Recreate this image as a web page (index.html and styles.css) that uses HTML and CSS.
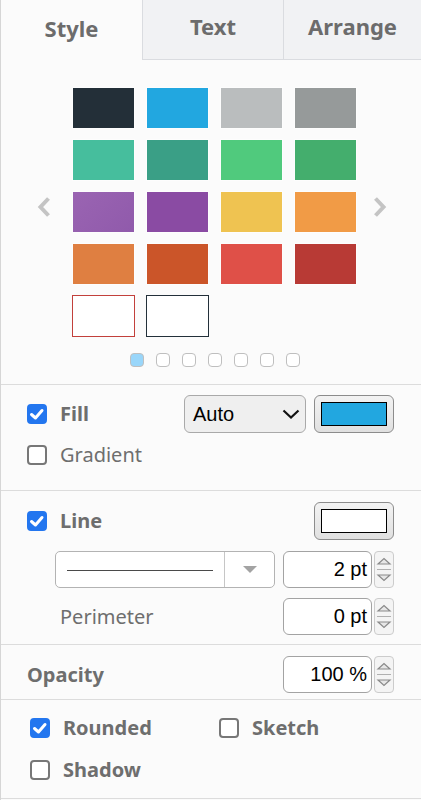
FILE: index.html
```html
<!DOCTYPE html>
<html>
<head>
<meta charset="utf-8">
<link rel="stylesheet" href="styles.css">
</head>
<body>
<div class="panel">
  <div class="tabs">
    <div class="tab tab-active">Style</div>
    <div class="tab tab-text">Text</div>
    <div class="tab tab-arrange">Arrange</div>
  </div>

  <div class="palette">
    <svg class="nav" width="14" height="22" viewBox="0 0 14 22"><polyline points="11.5,2.5 3.5,11 11.5,19.5" /></svg>
    <div class="palette-center">
      <div class="swatches">
        <div class="sw" style="background:#232f38"></div>
        <div class="sw" style="background:#22a7e0"></div>
        <div class="sw" style="background:#babdbe"></div>
        <div class="sw" style="background:#969a9a"></div>
        <div class="sw" style="background:#46be9d"></div>
        <div class="sw" style="background:#3a9f86"></div>
        <div class="sw" style="background:#50ca7d"></div>
        <div class="sw" style="background:#44ae6d"></div>
        <div class="sw" style="background:linear-gradient(135deg,#9a64b2,#905aab)"></div>
        <div class="sw" style="background:#8a4ba3"></div>
        <div class="sw" style="background:#efc351"></div>
        <div class="sw" style="background:#f19b46"></div>
        <div class="sw" style="background:#df7f41"></div>
        <div class="sw" style="background:#cb5529"></div>
        <div class="sw" style="background:#df5048"></div>
        <div class="sw" style="background:#b83a35"></div>
        <div class="sw sw-white sw-red"></div>
        <div class="sw sw-white sw-dark"></div>
      </div>
      <div class="dots">
        <span class="dot dot-on"></span>
        <span class="dot"></span>
        <span class="dot"></span>
        <span class="dot"></span>
        <span class="dot"></span>
        <span class="dot"></span>
        <span class="dot"></span>
      </div>
    </div>
    <svg class="nav nav-right" width="14" height="22" viewBox="0 0 14 22"><polyline points="2.5,2.5 10.5,11 2.5,19.5" /></svg>
  </div>

  <div class="section sec-fill">
    <div class="row row-main">
      <div class="check">
        <span class="cb cb-on"><svg width="20" height="20" viewBox="0 0 20 20"><polyline points="4.5,10.5 8.5,14 15,6.5" /></svg></span>
        <span class="lbl bold">Fill</span>
      </div>
      <div class="controls">
        <div class="select">
          <span>Auto</span>
          <svg width="18" height="10" viewBox="0 0 18 10"><polyline points="1.5,1.5 9,8.5 16.5,1.5" /></svg>
        </div>
        <div class="colorbtn"><div class="colorfill fill-blue"></div></div>
      </div>
    </div>
    <div class="row row-sub">
      <div class="check">
        <span class="cb"></span>
        <span class="lbl">Gradient</span>
      </div>
    </div>
  </div>

  <div class="section sec-line">
    <div class="row row-main">
      <div class="check">
        <span class="cb cb-on"><svg width="20" height="20" viewBox="0 0 20 20"><polyline points="4.5,10.5 8.5,14 15,6.5" /></svg></span>
        <span class="lbl bold">Line</span>
      </div>
      <div class="colorbtn"><div class="colorfill fill-white"></div></div>
    </div>
    <div class="row row-style">
      <div class="linestyle">
        <div class="ls-preview"><div class="ls-line"></div></div>
        <div class="ls-arrow"><svg width="14" height="8" viewBox="0 0 14 8"><polygon points="0,0 14,0 7,7" /></svg></div>
      </div>
      <div class="numfield">
        <div class="num">2 pt</div>
        <div class="spin"><svg width="20" height="37" viewBox="0 0 20 37"><polygon points="4,13 10,7.5 16,13" /><line x1="3" y1="18.5" x2="17" y2="18.5" /><polygon points="4,24 10,29.5 16,24" /></svg></div>
      </div>
    </div>
    <div class="row row-perim">
      <span class="lbl perim">Perimeter</span>
      <div class="numfield">
        <div class="num">0 pt</div>
        <div class="spin"><svg width="20" height="37" viewBox="0 0 20 37"><polygon points="4,13 10,7.5 16,13" /><line x1="3" y1="18.5" x2="17" y2="18.5" /><polygon points="4,24 10,29.5 16,24" /></svg></div>
      </div>
    </div>
  </div>

  <div class="section sec-opacity">
    <div class="row row-opacity">
      <span class="lbl bold">Opacity</span>
      <div class="numfield">
        <div class="num">100 %</div>
        <div class="spin"><svg width="20" height="37" viewBox="0 0 20 37"><polygon points="4,13 10,7.5 16,13" /><line x1="3" y1="18.5" x2="17" y2="18.5" /><polygon points="4,24 10,29.5 16,24" /></svg></div>
      </div>
    </div>
  </div>

  <div class="section sec-opts">
    <div class="check">
      <span class="cb cb-on"><svg width="20" height="20" viewBox="0 0 20 20"><polyline points="4.5,10.5 8.5,14 15,6.5" /></svg></span>
      <span class="lbl bold">Rounded</span>
    </div>
    <div class="check">
      <span class="cb"></span>
      <span class="lbl bold">Sketch</span>
    </div>
    <div class="check">
      <span class="cb"></span>
      <span class="lbl bold">Shadow</span>
    </div>
  </div>
</div>
</body>
</html>
```

FILE: styles.css
```css
html, body {
  margin: 0;
  padding: 0;
  background: #fbfbfb;
}

.panel {
  width: 421px;
  height: 800px;
  box-sizing: border-box;
  border-left: 1px solid #d6d6d6;
  background: #fbfbfb;
  font-family: "Noto Sans", "Open Sans", sans-serif;
  color: #707070;
  overflow: hidden;
}

/* Tabs */
.tabs {
  display: flex;
  height: 60px;
}

.tab {
  box-sizing: border-box;
  height: 60px;
  display: flex;
  justify-content: center;
  align-items: flex-start;
  font-size: 22px;
  font-weight: 700;
  line-height: 28px;
  color: #6c6c6c;
}

.tab-active {
  width: 141px;
  padding-top: 14px;
}

.tab-text,
.tab-arrange {
  background: #f1f2f4;
  border-left: 1px solid #dadce0;
  border-bottom: 1px solid #dadce0;
  padding-top: 12px;
}

.tab-text {
  width: 141px;
}

.tab-arrange {
  width: 138px;
}

/* Palette */
.palette {
  display: flex;
  align-items: flex-start;
  padding: 27px 0 17px 36px;
}

.nav {
  margin-top: 109px;
  flex: none;
}

.nav polyline {
  fill: none;
  stroke: #c4c4c4;
  stroke-width: 4;
  stroke-linejoin: miter;
}

.palette-center {
  margin-left: 21px;
  display: flex;
  flex-direction: column;
  align-items: center;
}

.nav-right {
  margin-left: 16px;
}

.swatches {
  display: grid;
  grid-template-columns: repeat(4, 63px);
  grid-auto-rows: 42px;
  column-gap: 11px;
  row-gap: 10px;
}

.sw {
  box-sizing: border-box;
  border: 1px solid #fdfdfd;
}

.sw-white {
  background: #ffffff;
}

.sw-red {
  border-color: #c2403b;
}

.sw-dark {
  border-color: #23303a;
}

.dots {
  display: flex;
  gap: 12px;
  margin-top: 16px;
}

.dot {
  width: 14px;
  height: 14px;
  box-sizing: border-box;
  border: 1px solid #bfbfbf;
  border-radius: 4px;
  background: #ffffff;
}

.dot-on {
  background: #99d6fa;
}

/* Sections */
.section {
  border-top: 1px solid #dcdcdc;
  padding: 0 27px 0 26px;
}

.row {
  display: flex;
  align-items: center;
  justify-content: space-between;
}

.check {
  display: flex;
  align-items: center;
  gap: 13px;
  height: 20px;
}

.cb {
  width: 20px;
  height: 20px;
  box-sizing: border-box;
  border: 2px solid #777777;
  border-radius: 4px;
  background: #ffffff;
  flex: none;
  position: relative;
}

.cb-on {
  background: #2376ef;
  border-color: #2376ef;
}

.cb svg {
  position: absolute;
  left: -2px;
  top: -2px;
}

.cb polyline {
  fill: none;
  stroke: #ffffff;
  stroke-width: 3;
  stroke-linecap: round;
  stroke-linejoin: round;
}

.lbl {
  font-size: 20px;
  line-height: 20px;
  color: #6e6e6e;
}

.bold {
  font-weight: 700;
}

/* Fill */
.sec-fill {
  padding-top: 10px;
  padding-bottom: 25px;
}

.row-main {
  height: 38px;
}

.row-sub {
  margin-top: 12px;
  height: 20px;
}

.controls {
  display: flex;
  gap: 8px;
}

.select {
  width: 122px;
  height: 38px;
  box-sizing: border-box;
  border: 1px solid #a9a9a9;
  border-radius: 6px;
  background: #efefef;
  display: flex;
  align-items: center;
  justify-content: space-between;
  padding: 0 5px 0 8px;
  font-family: "Liberation Sans", Arial, sans-serif;
  font-size: 20px;
  color: #000000;
}

.select polyline {
  fill: none;
  stroke: #111111;
  stroke-width: 2.2;
}

.colorbtn {
  width: 80px;
  height: 38px;
  box-sizing: border-box;
  border: 1px solid #8c8c8c;
  border-radius: 6px;
  background: linear-gradient(#f3f3f3, #e0e0e0);
  padding: 6px;
}

.colorfill {
  width: 100%;
  height: 100%;
  box-sizing: border-box;
  border: 1px solid #000000;
}

.fill-blue {
  background: #22a7e0;
}

.fill-white {
  background: #ffffff;
}

/* Line */
.sec-line {
  padding-top: 11px;
  padding-bottom: 9px;
}

.row-style {
  margin-top: 11px;
  height: 37px;
  padding-left: 28px;
}

.linestyle {
  width: 220px;
  height: 37px;
  box-sizing: border-box;
  border: 1px solid #b3b3b3;
  border-radius: 5px;
  background: #ffffff;
  display: flex;
}

.ls-preview {
  width: 168px;
  padding: 0 11px;
  display: flex;
  align-items: center;
  box-sizing: border-box;
}

.ls-line {
  width: 100%;
  height: 1px;
  background: #4a4a4a;
  margin-top: 1px;
}

.ls-arrow {
  flex: 1;
  border-left: 1px solid #c6c6c6;
  display: flex;
  align-items: center;
  justify-content: center;
}

.ls-arrow polygon {
  fill: #a3a3a3;
}

.numfield {
  display: flex;
  gap: 2px;
}

.num {
  width: 89px;
  height: 37px;
  box-sizing: border-box;
  border: 1px solid #a3a3a3;
  border-radius: 6px;
  background: #ffffff;
  display: flex;
  align-items: center;
  justify-content: flex-end;
  padding-right: 4px;
  font-family: "Liberation Sans", Arial, sans-serif;
  font-size: 20px;
  color: #000000;
}

.spin {
  width: 20px;
  height: 37px;
  box-sizing: border-box;
  border: 1px solid #cccccc;
  border-radius: 4px;
  background: #f4f4f4;
  overflow: hidden;
}

.spin svg {
  display: block;
  margin: -1px 0 0 -1px;
}

.spin polygon {
  fill: #e6e6e6;
  stroke: #8a8a8a;
  stroke-width: 1.2;
}

.spin line {
  stroke: #b0b0b0;
  stroke-width: 1;
}

.row-perim {
  margin-top: 10px;
  height: 37px;
}

.perim {
  margin-left: 33px;
}

/* Opacity */
.sec-opacity {
  padding-top: 11px;
  padding-bottom: 6px;
}

.row-opacity {
  height: 37px;
}

/* Options */
.sec-opts {
  display: grid;
  grid-template-columns: 189px auto;
  row-gap: 22px;
  padding: 18px 0 18px 29px;
  border-bottom: 1px solid #dcdcdc;
}
```
